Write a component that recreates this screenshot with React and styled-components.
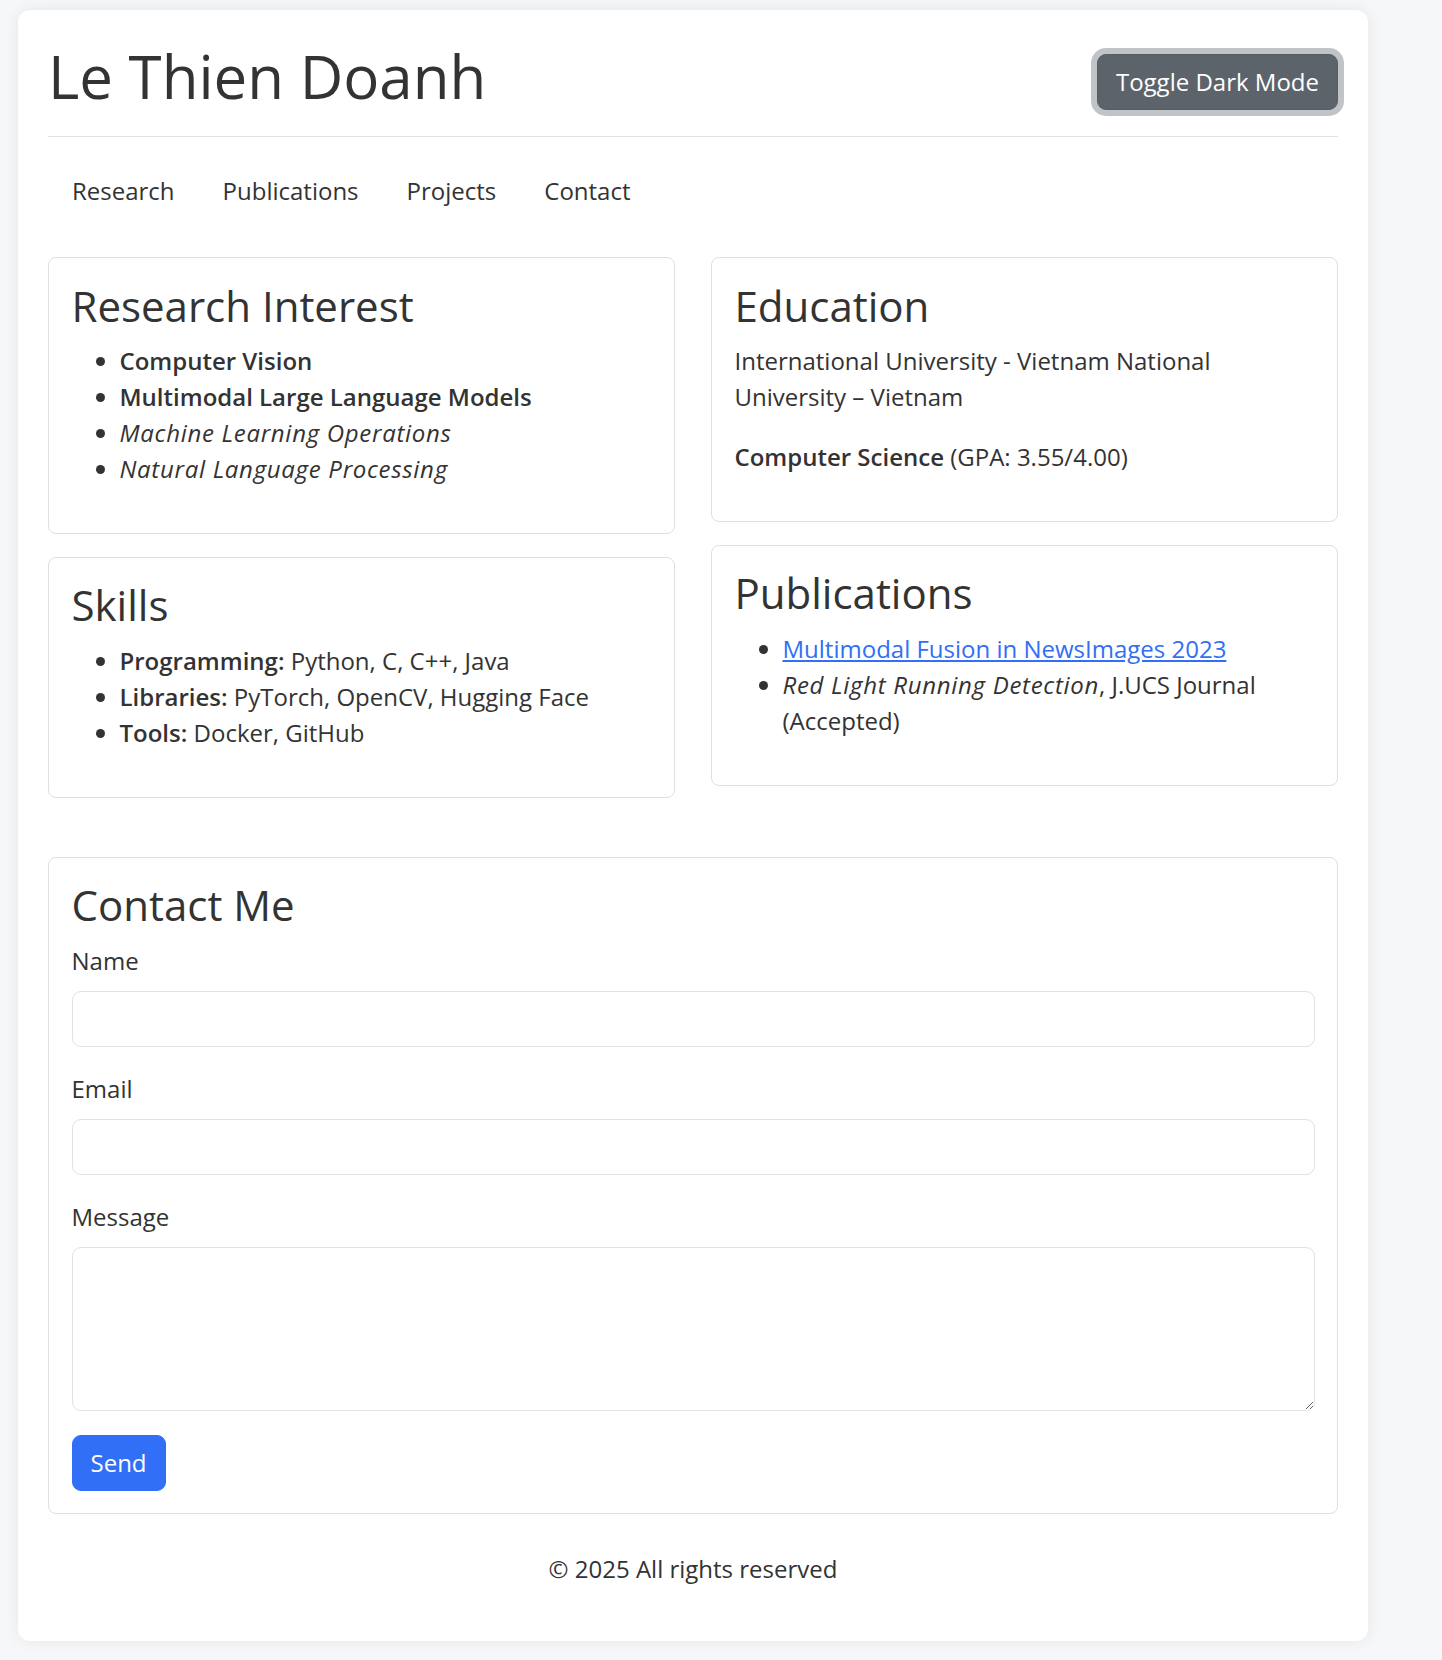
import React from 'react';
import styled, { createGlobalStyle } from 'styled-components';

const GlobalStyle = createGlobalStyle`
  body {
    margin: 0;
    background: #f6f7f9;
    font-family: "Open Sans", "Noto Sans", sans-serif;
    font-size: 24px;
    line-height: 1.5;
    color: #333;
  }
  * { box-sizing: border-box; }
  strong { font-weight: 600; }
  em { letter-spacing: 0.7px; }
`

const Page = styled.div`
  padding: 10px 0 20px 18px;
`

const Container = styled.div`
  width: 1350px;
  background: #fff;
  border-radius: 12px;
  padding: 30px;
  box-shadow: 0 0 16px rgba(0,0,0,0.07);
`

const Header = styled.header`
  display: flex;
  justify-content: space-between;
  align-items: center;
`

const Title = styled.h1`
  margin: 0 0 12px;
  font-size: 60px;
  font-weight: 400;
  line-height: 1.2;
`

const ToggleButton = styled.button`
  font-family: inherit;
  font-size: 24px;
  line-height: 36px;
  color: #fff;
  background: #5c636a;
  border: 1px solid #565e64;
  border-radius: 9px;
  padding: 9px 18px;
  box-shadow: 0 0 0 6px rgba(130,138,145,0.5);
  cursor: pointer;
`

const Rule = styled.hr`
  margin: 12px 0 24px;
  border: 0;
  border-top: 1px solid #e1e3e5;
`

const Nav = styled.nav`
  display: flex;
  margin-bottom: 36px;
`

const NavLink = styled.a`
  padding: 12px 24px;
  color: #333;
  text-decoration: none;
`

const Columns = styled.div`
  display: grid;
  grid-template-columns: 1fr 1fr;
  column-gap: 36px;
  align-items: start;
`

const Card = styled.section`
  border: 1px solid #dfdfdf;
  border-radius: 8px;
  padding: 22.5px;
  margin-bottom: ${props => props.mb ?? 22.5}px;
  margin-top: ${props => props.mt || 0}px;
`

const CardTitle = styled.h3`
  margin: 0 0 12px;
  font-size: 42px;
  font-weight: 400;
  line-height: 1.2;
`

const List = styled.ul`
  margin: 0 0 24px;
  padding-left: 48px;
`

const Text = styled.p`
  margin: 0 0 24px;
`

const Link = styled.a`
  color: #316ff6;
  text-decoration: underline;
`

const Field = styled.div`
  margin-bottom: 24px;
`

const Label = styled.label`
  display: block;
  margin-bottom: 12px;
`

const Input = styled.input`
  display: block;
  width: 100%;
  font-family: inherit;
  font-size: 24px;
  line-height: 36px;
  padding: 9px 18px;
  border: 1px solid #dee2e6;
  border-radius: 9px;
  color: #333;
  background: #fff;
`

const TextArea = styled(Input).attrs({ as: 'textarea' })`
  height: 164px;
  resize: vertical;
`

const SendButton = styled.button`
  font-family: inherit;
  font-size: 24px;
  line-height: 36px;
  color: #fff;
  background: #316ff6;
  border: 1px solid #316ff6;
  border-radius: 9px;
  padding: 9px 18px;
  cursor: pointer;
`

const Footer = styled.footer`
  text-align: center;
  margin-top: 37px;
  padding-bottom: 24px;
`

export default function App() {
  return (
    <Page>
      <GlobalStyle />
      <Container>
        <Header>
          <Title>Le Thien Doanh</Title>
          <ToggleButton>Toggle Dark Mode</ToggleButton>
        </Header>
        <Rule />
        <Nav>
          <NavLink href="#research">Research</NavLink>
          <NavLink href="#publications">Publications</NavLink>
          <NavLink href="#projects">Projects</NavLink>
          <NavLink href="#contact">Contact</NavLink>
        </Nav>

        <Columns>
          <div>
            <Card id="research">
              <CardTitle>Research Interest</CardTitle>
              <List>
                <li><strong>Computer Vision</strong></li>
                <li><strong>Multimodal Large Language Models</strong></li>
                <li><em>Machine Learning Operations</em></li>
                <li><em>Natural Language Processing</em></li>
              </List>
            </Card>
            <Card>
              <CardTitle>Skills</CardTitle>
              <List>
                <li><strong>Programming:</strong> Python, C, C++, Java</li>
                <li><strong>Libraries:</strong> PyTorch, OpenCV, Hugging Face</li>
                <li><strong>Tools:</strong> Docker, GitHub</li>
              </List>
            </Card>
          </div>
          <div>
            <Card>
              <CardTitle>Education</CardTitle>
              <Text>International University - Vietnam National University – Vietnam</Text>
              <Text><strong>Computer Science</strong> (GPA: 3.55/4.00)</Text>
            </Card>
            <Card id="publications">
              <CardTitle>Publications</CardTitle>
              <List>
                <li><Link href="#">Multimodal Fusion in NewsImages 2023</Link></li>
                <li><em>Red Light Running Detection</em>, J.UCS Journal (Accepted)</li>
              </List>
            </Card>
          </div>
        </Columns>

        <Card id="contact" mt={36} mb={0}>
          <CardTitle>Contact Me</CardTitle>
          <Field>
            <Label>Name</Label>
            <Input type="text" />
          </Field>
          <Field>
            <Label>Email</Label>
            <Input type="email" />
          </Field>
          <Field>
            <Label>Message</Label>
            <TextArea rows={4} />
          </Field>
          <SendButton>Send</SendButton>
        </Card>

        <Footer>© 2025 All rights reserved</Footer>
      </Container>
    </Page>
  );
}
